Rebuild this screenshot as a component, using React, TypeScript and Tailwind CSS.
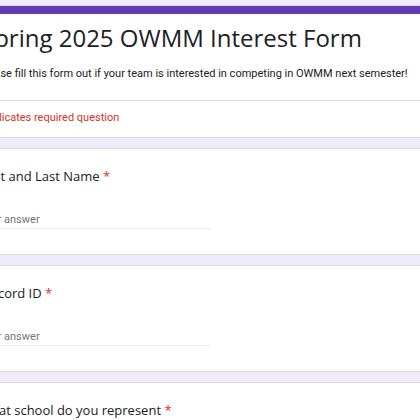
import React from 'react'

const sans = { fontFamily: '"Open Sans", "Liberation Sans", sans-serif' }

function Question({ label, answer }: { label: string; answer?: boolean }) {
  return (
    <div className="bg-white rounded-lg border border-[#dadce0] px-6 pt-[17px] pb-[25px]">
      <div className="text-[13px] leading-5 text-[#202124] font-['Open_Sans',sans-serif]">
        {label} <span className="text-[#d93025]">*</span>
      </div>
      {answer && (
        <div className="mt-[26px] w-[232px] border-b border-[#ebebeb] text-[11px] leading-4 text-[#70757a] font-['Roboto',sans-serif]">
          Your answer
        </div>
      )}
    </div>
  )
}

export default function App() {
  return (
    <div className="w-[420px] h-[420px] overflow-hidden bg-[#f0ebf8] pt-[5px]">
      <div className="-ml-[46px] w-[490px] flex flex-col gap-[10px]">
        {/* Header card */}
        <div className="bg-white rounded-lg border border-[#dadce0] overflow-hidden">
          <div className="h-[8px] bg-[#673ab7]" />
          <div className="px-6 pt-[8px] pb-[18px] border-b border-[#dadce0]">
            <h1 className="ml-[2px] text-[24px] leading-8 text-[#202124] whitespace-nowrap" style={sans}>
              Spring 2025 OWMM Interest Form
            </h1>
            <p className="mt-[12px] text-[11px] leading-4 text-[#202124] whitespace-nowrap font-['Roboto',sans-serif]">
              Please fill this form out if your team is interested in competing in OWMM next semester!
            </p>
          </div>
          <div className="px-6 pt-[9px] pb-[11px] text-[11px] leading-4 text-[#d93025] font-['Roboto',sans-serif]">
            * Indicates required question
          </div>
        </div>
        <Question label="First and Last Name" answer />
        <Question label="Discord ID" answer />
        <Question label="What school do you represent" />
      </div>
    </div>
  )
}
